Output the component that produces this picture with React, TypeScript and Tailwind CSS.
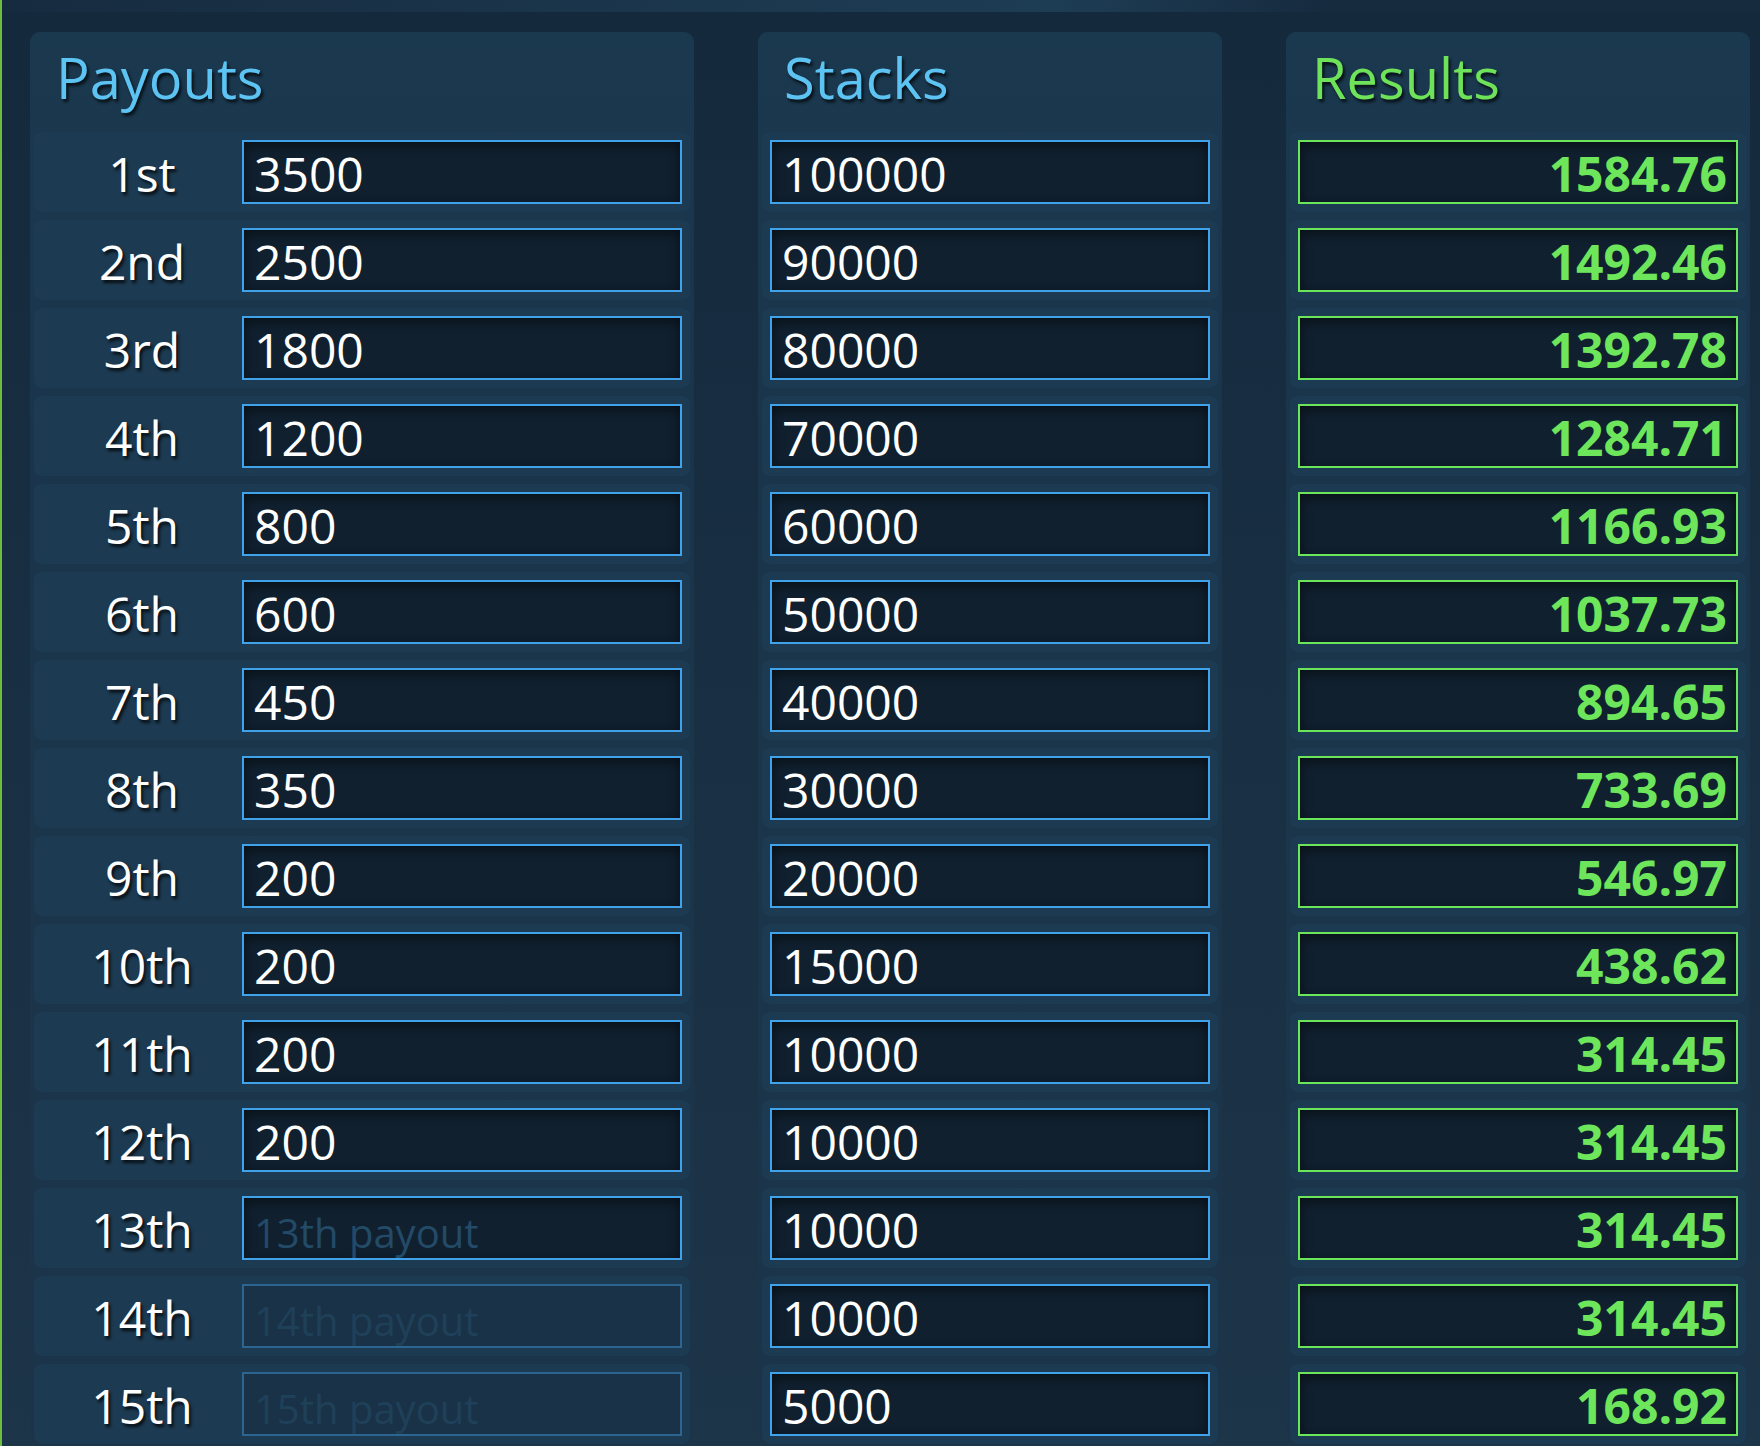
import type { ReactElement, ReactNode } from 'react';

// ICM calculator sheet: payouts on the left, chip stacks in the middle and the
// computed equity per player on the right. Only the first N payout slots are
// editable; after the first empty slot the rest are locked.

const PAYOUTS = ['3500', '2500', '1800', '1200', '800', '600', '450', '350', '200', '200', '200', '200', '', '', ''];
const STACKS = [
  '100000', '90000', '80000', '70000', '60000', '50000', '40000', '30000',
  '20000', '15000', '10000', '10000', '10000', '10000', '5000',
];
const RESULTS = [
  1584.76, 1492.46, 1392.78, 1284.71, 1166.93, 1037.73, 894.65, 733.69,
  546.97, 438.62, 314.45, 314.45, 314.45, 314.45, 168.92,
];

function ordinal(n: number): string {
  const mod100 = n % 100;
  if (mod100 >= 11 && mod100 <= 13) return `${n}th`;
  switch (n % 10) {
    case 1:
      return `${n}st`;
    case 2:
      return `${n}nd`;
    case 3:
      return `${n}rd`;
    default:
      return `${n}th`;
  }
}

const INPUT_BASE =
  'h-16 w-full min-w-0 border-2 pt-[3px] font-[Open_Sans,Noto_Sans,sans-serif] text-[48px] outline-none';
const INPUT_LIVE = 'bg-[#10202f] shadow-[inset_0_3px_12px_rgba(0,0,0,0.55)]';

function Panel({
  title,
  tone,
  width,
  children,
}: {
  title: string;
  tone: 'blue' | 'green';
  width: string;
  children: ReactNode;
}): ReactElement {
  return (
    <section
      className={`${width} shrink-0 rounded-[10px] bg-gradient-to-b from-[#1a384e] via-[#1a354b] via-30% to-[#1c3449] px-1`}
    >
      <h2
        className={`h-[100px] pl-[22px] pt-[17px] font-[Open_Sans,Noto_Sans,sans-serif] text-[56px] font-normal leading-[56px] [text-shadow:2px_3px_3px_rgba(0,0,0,0.7)] ${
          tone === 'green' ? 'text-[#6ee35a]' : 'text-[#5cc3f3]'
        }`}
      >
        {title}
      </h2>
      <ul className="flex flex-col gap-2">{children}</ul>
    </section>
  );
}

export default function App(): ReactElement {
  const firstEmpty = PAYOUTS.findIndex((value) => value === '');

  return (
    <div className="relative h-[1446px] overflow-hidden border-l-2 border-[#6cbf3c] bg-gradient-to-b from-[#15293c] to-[#1d3549] font-[Open_Sans,Noto_Sans,sans-serif]">
      <div className="h-3 bg-gradient-to-r from-[#172b3f] via-[#1d3d55] via-60% to-[#172b3f] to-75%" />
      <div className="flex gap-16 pl-[28px] pt-5">
        <Panel title="Payouts" tone="blue" width="w-[664px]">
          {PAYOUTS.map((value, i) => {
            const locked = firstEmpty !== -1 && i > firstEmpty;
            return (
              <li key={i} className="flex h-20 items-center rounded-lg bg-[#1c3a51] py-2 pl-2 pr-2">
                <span className="w-[200px] shrink-0 pt-[3px] text-center text-[48px] text-white [text-shadow:2px_3px_3px_rgba(0,0,0,0.75)]">
                  {ordinal(i + 1)}
                </span>
                <input
                  type="text"
                  defaultValue={value}
                  disabled={locked}
                  placeholder={`${ordinal(i + 1)} payout`}
                  className={`${INPUT_BASE} pl-[10px] placeholder:text-[40px] ${
                    locked
                      ? 'border-[#2b6590] bg-[#193247] placeholder:text-[#1f4059]'
                      : `${INPUT_LIVE} border-[#3fa2ea] text-white placeholder:text-[#234a67]`
                  }`}
                />
              </li>
            );
          })}
        </Panel>

        <Panel title="Stacks" tone="blue" width="w-[464px]">
          {STACKS.map((value, i) => (
            <li key={i} className="flex h-20 items-center rounded-lg bg-[#1c3a51] p-2">
              <input
                type="text"
                defaultValue={value}
                className={`${INPUT_BASE} ${INPUT_LIVE} border-[#3fa2ea] pl-[10px] text-white`}
              />
            </li>
          ))}
        </Panel>

        <Panel title="Results" tone="green" width="w-[464px]">
          {RESULTS.map((value, i) => (
            <li key={i} className="flex h-20 items-center rounded-lg bg-[#1c3a51] p-2">
              <input
                type="text"
                readOnly
                value={value.toFixed(2)}
                className={`${INPUT_BASE} ${INPUT_LIVE} border-[#6ae65a] pr-[9px] text-right font-bold text-[#6ee65c]`}
              />
            </li>
          ))}
        </Panel>
      </div>
    </div>
  );
}
